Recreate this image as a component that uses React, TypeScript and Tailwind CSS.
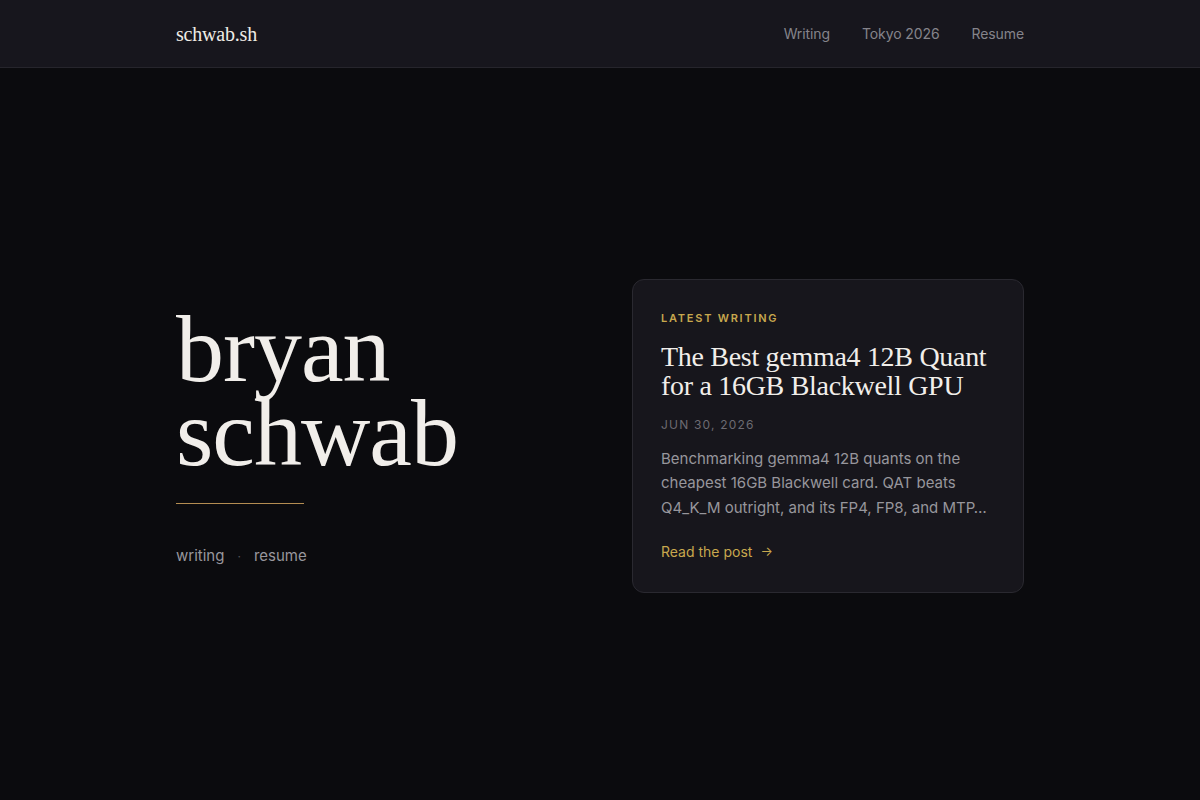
import React from "react";

const serif = { fontFamily: '"Liberation Serif", "DejaVu Serif", serif' };
const sans = { fontFamily: 'Inter, "Noto Sans", sans-serif' };

function Header() {
  return (
    <header className="h-[68px] bg-[#17161d] border-b border-[#26252c]">
      <div className="mx-auto w-[848px] h-full flex items-center justify-between">
        <a className="text-[20px] text-[#efece6] tracking-[-0.2px]" style={serif}>
          schwab.sh
        </a>
        <nav className="flex items-center gap-8 text-[14px] text-[#85848b] tracking-[-0.1px]" style={sans}>
          <a>Writing</a>
          <a>Tokyo 2026</a>
          <a>Resume</a>
        </nav>
      </div>
    </header>
  );
}

function Hero() {
  return (
    <div className="flex flex-col">
      <h1
        className="mt-[7px] text-[96px] leading-[84px] text-[#f1eeea] tracking-[-1px]"
        style={serif}
      >
        <span className="block">bryan</span>
        <span className="block">schwab</span>
      </h1>
      <div className="mt-[28px] w-32 h-px bg-[#b48d52]" />
      <div className="mt-[41px] flex items-center gap-[13px] text-[15px] text-[#98979d]" style={sans}>
        <a>writing</a>
        <span className="text-[#55545a] text-[12px]">·</span>
        <a>resume</a>
      </div>
    </div>
  );
}

function LatestCard() {
  return (
    <article className="mt-[4px] rounded-xl border border-[#2a2930] bg-[#17161c] px-[28px] pt-[33px] pb-[29px]">
      <p
        className="text-[11px] font-semibold tracking-[0.16em] text-[#c8a84e] leading-none"
        style={sans}
      >
        LATEST WRITING
      </p>
      <h2
        className="mt-[18px] text-[28px] leading-[29px] text-[#f1eeea] tracking-[-0.3px]"
        style={serif}
      >
        The Best gemma4 12B Quant for a 16GB Blackwell GPU
      </h2>
      <p
        className="mt-[19px] text-[12px] tracking-[0.1em] text-[#6c6b72] leading-none"
        style={sans}
      >
        JUN 30, 2026
      </p>
      <p
        className="mt-[16px] text-[15px] leading-[24.5px] text-[#97969c]"
        style={sans}
      >
        Benchmarking gemma4 12B quants on the cheapest 16GB Blackwell card. QAT beats
        Q4_K_M outright, and its FP4, FP8, and MTP…
      </p>
      <a
        className="mt-[21px] inline-flex items-center gap-2 text-[14px] text-[#c8a84e]"
        style={sans}
      >
        Read the post <span className="text-[13px]">→</span>
      </a>
    </article>
  );
}

export default function App() {
  return (
    <div className="min-h-[800px] bg-[#0b0b0e] flex flex-col">
      <Header />
      <main className="flex-1 flex items-center">
        <div className="mx-auto w-[848px] grid grid-cols-2 gap-16 items-center">
          <Hero />
          <LatestCard />
        </div>
      </main>
    </div>
  );
}
